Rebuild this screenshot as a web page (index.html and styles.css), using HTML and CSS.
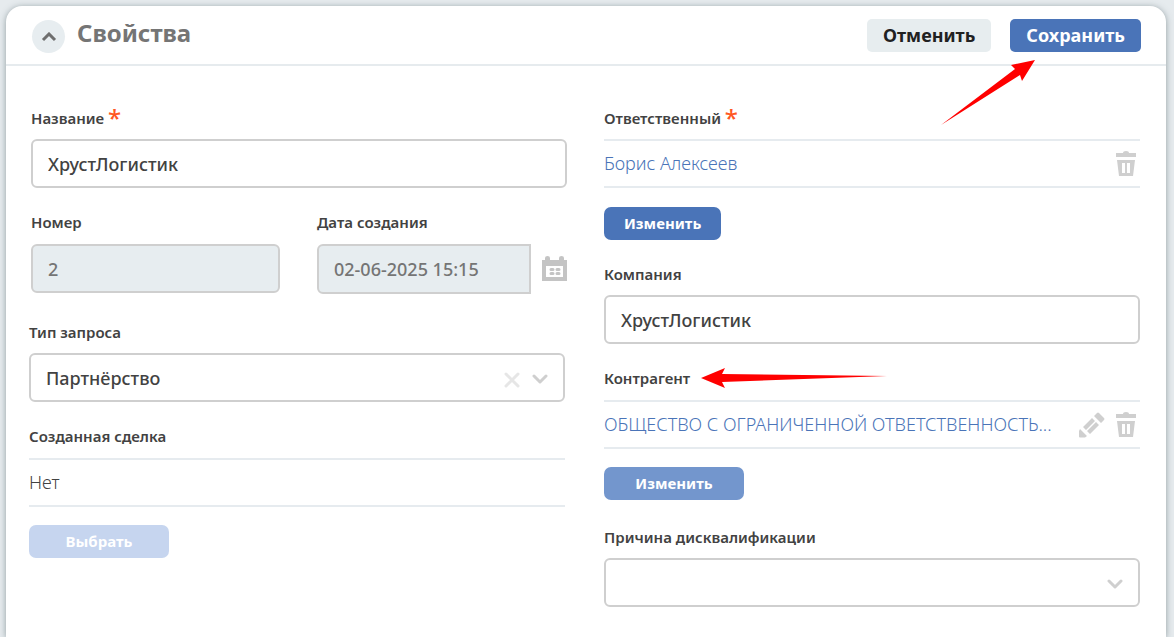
FILE: index.html
```html
<!DOCTYPE html>
<html lang="ru">
<head>
<meta charset="utf-8">
<meta name="viewport" content="width=device-width, initial-scale=1">
<title>Свойства</title>
<link rel="stylesheet" href="styles.css">
</head>
<body>
<svg class="sprite" aria-hidden="true">
  <symbol id="trash" viewBox="0 0 22 26">
    <path d="M8 2Q8 0 11 0T14 2H21V6H1V2ZM2 9H20L18 25H4ZM7 12V22H10V12ZM12 12V22H15V12Z" fill="currentColor" fill-rule="evenodd"/>
  </symbol>
  <symbol id="chevron" viewBox="0 0 16 10">
    <path d="M2 2L8 8L14 2" fill="none" stroke="currentColor" stroke-width="3" stroke-linecap="round" stroke-linejoin="round"/>
  </symbol>
</svg>
<main class="card">
  <header class="card-header">
    <button class="collapse" type="button" aria-label="Свернуть">
      <svg width="16" height="10" viewBox="0 0 16 10"><path d="M2 8L8 2L14 8" fill="none" stroke="currentColor" stroke-width="3"/></svg>
    </button>
    <h1 class="title">Свойства</h1>
    <div class="actions">
      <button class="action action-cancel" type="button">Отменить</button>
      <button class="action action-save" type="button">Сохранить</button>
      <svg class="arrow arrow-save" width="96" height="66" viewBox="0 0 96 66" aria-hidden="true"><path d="M0 65L74 9L70 5L94 0L81 21L79 15Z" fill="#f00"/></svg>
    </div>
  </header>
  <form class="form">
    <div class="column">
      <div class="group group-start">
        <div class="field">
          <label class="label" for="name">Название <span class="required">*</span></label>
          <input class="control" id="name" type="text" value="ХрустЛогистик">
        </div>
        <div class="pair">
          <div class="field field-spaced">
            <label class="label" for="number">Номер</label>
            <input class="control" id="number" type="text" value="2" disabled>
          </div>
          <div class="field field-spaced">
            <label class="label" for="created">Дата создания</label>
            <div class="date">
              <input class="control control-date" id="created" type="text" value="02-06-2025 15:15" disabled>
              <svg class="calendar" width="25" height="25" viewBox="0 0 25 25" aria-hidden="true">
                <path d="M0 4H3V2Q3 0 5.500 0T8 2V4H17V2Q17 0 19.500 0T22 2V4H25V25H0ZM4 10V21H21V10Z" fill="currentColor" fill-rule="evenodd"/>
                <path d="M9 13.500H11M15 13.500H17M9 17.500H11M15 17.500H17" stroke="currentColor" stroke-width="3" stroke-linecap="round"/>
              </svg>
            </div>
          </div>
        </div>
      </div>
      <div class="group group-end">
        <div class="field">
          <label class="label" for="type">Тип запроса</label>
          <div class="select">
            <select class="control" id="type"><option>Партнёрство</option></select>
            <button class="clear" type="button" aria-label="Очистить">
              <svg width="16" height="16" viewBox="0 0 16 16"><path d="M2 2L14 14M14 2L2 14" stroke="currentColor" stroke-width="3" stroke-linecap="round"/></svg>
            </button>
            <svg class="chevron" width="16" height="10"><use href="#chevron"/></svg>
          </div>
        </div>
        <div class="field field-spaced">
          <span class="label">Созданная сделка</span>
          <div class="reference"><span class="value">Нет</span></div>
          <button class="pick pick-wide pick-disabled" type="button" disabled>Выбрать</button>
        </div>
      </div>
    </div>
    <div class="column column-right">
      <div class="field">
        <span class="label">Ответственный <span class="required">*</span></span>
        <div class="reference">
          <a class="value link" href="#">Борис Алексеев</a>
          <button class="icon" type="button" aria-label="Удалить"><svg width="22" height="26"><use href="#trash"/></svg></button>
        </div>
        <button class="pick" type="button">Изменить</button>
      </div>
      <div class="field">
        <label class="label" for="company">Компания</label>
        <input class="control" id="company" type="text" value="ХрустЛогистик">
      </div>
      <div class="field field-spaced">
        <span class="label label-marked">Контрагент
          <svg class="arrow arrow-party" width="186" height="20" viewBox="0 0 186 20" aria-hidden="true"><path d="M0 10L24 0L21 6L186 8L21 14L24 20Z" fill="#f00"/></svg>
        </span>
        <div class="reference">
          <a class="value link" href="#">ОБЩЕСТВО С ОГРАНИЧЕННОЙ ОТВЕТСТВЕННОСТЬ...</a>
          <button class="icon" type="button" aria-label="Редактировать">
            <svg width="26" height="26" viewBox="0 0 26 26"><path d="M18 1Q19 0 20 1L25 6Q26 7 25 8L22 11L15 4ZM13 6L16 9L7 18L4 15ZM17 10L20 13L11 22L8 19ZM1 17L8 24L6 25.500H1Q0 25.500 0 24.500V19Z" fill="currentColor"/></svg>
          </button>
          <button class="icon" type="button" aria-label="Удалить"><svg width="22" height="26"><use href="#trash"/></svg></button>
        </div>
        <button class="pick pick-wide pick-muted" type="button">Изменить</button>
      </div>
      <div class="field field-last">
        <label class="label" for="reason">Причина дисквалификации</label>
        <div class="select">
          <select class="control" id="reason"><option value=""></option></select>
          <svg class="chevron" width="16" height="10"><use href="#chevron"/></svg>
        </div>
      </div>
    </div>
  </form>
</main>
</body>
</html>
```
FILE: styles.css
```css
* { box-sizing: border-box; }
body {
  margin: 0;
  padding: 6px 8px 0 6px;
  min-height: 100vh;
  display: flex;
  flex-direction: column;
  background: #e6ebee;
  color: #424242;
  font-family: "Noto Sans", "Open Sans", sans-serif;
  font-size: 18px;
}
button, input, select { font: inherit; color: inherit; }
button { border: 0; padding: 0; cursor: pointer; }
svg { display: block; }
.sprite { position: absolute; width: 0; height: 0; }

.card {
  flex: 1;
  background: #fff;
  border-radius: 16px 16px 0 0;
  box-shadow: 0 1px 6px rgba(60, 80, 85, 0.5);
}
.card-header {
  display: flex;
  align-items: center;
  height: 60px;
  padding: 0 25px 0 26px;
  border-bottom: 2px solid #e6ebee;
}
.collapse {
  width: 33px;
  height: 33px;
  margin-top: 3px;
  display: grid;
  place-items: center;
  border-radius: 50%;
  background: #e7edf0;
  color: #6e6e6e;
}
.title {
  margin: 0 auto 4px 12px;
  color: #757575;
  font-size: 24px;
  line-height: 32px;
  font-weight: 700;
}
.actions { position: relative; display: flex; gap: 19px; }
.action {
  height: 33px;
  padding: 0 16px;
  border-radius: 5px;
  font-weight: 700;
}
.action-cancel { background: #e7edef; color: #212121; }
.action-save { background: #4a74b8; color: #fff; }

.arrow { position: absolute; pointer-events: none; }
.arrow-save { right: 104px; top: 41px; }
.arrow-party { left: 100%; top: 0; margin-left: 11px; }

.form {
  display: grid;
  grid-template-columns: 538fr 536fr;
  gap: 37px;
  padding: 42px 26px 30px 23px;
}
.column, .group { display: flex; flex-direction: column; min-width: 0; }
.column { gap: 28px; }
.group, .column-right { gap: 24px; }
.group-start { padding-left: 2px; }
.group-end { padding-right: 2px; }
.pair { display: grid; grid-template-columns: 249fr 250fr; gap: 37px; }
.field { display: flex; flex-direction: column; align-items: flex-start; min-width: 0; }
.field-last { padding-top: 3px; }
.label {
  height: 20px;
  margin-bottom: 11px;
  font-size: 15px;
  line-height: 20px;
  font-weight: 600;
}
.field-spaced .label { margin-bottom: 12px; }
.label-marked { position: relative; }
.required { color: #ff5722; font-size: 24px; line-height: 20px; font-weight: 500; vertical-align: -3px; }
.control {
  width: 100%;
  height: 49px;
  padding: 0 15px;
  border: 2px solid #cfcfcf;
  border-radius: 6px;
  background: #fff;
  font-weight: 500;
  appearance: none;
}
.control:disabled { background: #e7edf0; color: #757575; opacity: 1; }
.date { width: 100%; display: flex; align-items: center; gap: 11px; color: #c4c4c4; }
.control-date { flex: 1; min-width: 0; height: 50px; border-radius: 6px 0 0 6px; }
.calendar { flex: none; margin-bottom: 2px; }
.select { position: relative; width: 100%; color: #cfcfcf; }
.select .control { display: block; color: #424242; }
.chevron { position: absolute; right: 17px; top: 21px; pointer-events: none; }
.clear { position: absolute; right: 45px; top: 19px; background: none; color: #e6e6e6; }
.reference {
  width: 100%;
  height: 49px;
  display: flex;
  align-items: center;
  gap: 10px;
  padding-right: 3px;
  border-block: 2px solid #e6ebef;
}
.value { flex: 1; min-width: 0; padding-bottom: 2px; font-weight: 300; line-height: 24px; white-space: nowrap; }
.link { color: #4a74b8; text-decoration: none; }
.icon { padding-top: 1px; background: none; color: #cfcfcf; }
.pick {
  height: 33px;
  margin-top: 19px;
  padding: 0 20px 2px;
  border-radius: 7px;
  background: #4a74b8;
  color: #fff;
  font-size: 15px;
  font-weight: 700;
}
.field-spaced .pick { margin-top: 18px; }
.pick-wide { width: 140px; }
.pick-muted { background: #7396cd; }
.pick-disabled { background: #c6d5ef; }
```
